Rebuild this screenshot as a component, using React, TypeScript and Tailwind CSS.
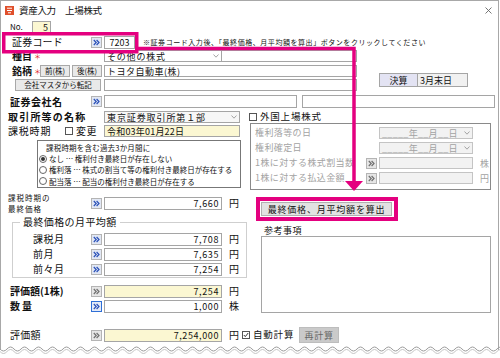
import React from 'react';

const JP = "font-['Noto_Sans_CJK_JP',sans-serif]";

type GoKind = 'blue' | 'gray' | 'active';

function Go({ kind = 'blue' }: { kind?: GoKind }) {
  const frame =
    kind === 'gray'
      ? 'bg-[#e6e6e6] border-[#b4b4b4]'
      : kind === 'active'
        ? 'bg-[#e4ebf8] border-[#2f6fd6]'
        : 'bg-[#e1e7f4] border-[#b4b4b4]';
  const stroke = kind === 'gray' ? '#707070' : '#2a50b8';
  return (
    <span className={`w-[11px] h-[11px] shrink-0 border flex items-center justify-center ${frame}`}>
      <svg width="7" height="7" viewBox="0 0 7 7" fill="none" stroke={stroke} strokeWidth="1.2">
        <path d="M0.8 1l2.4 2.5L0.8 6M3.6 1l2.4 2.5L3.6 6" />
      </svg>
    </span>
  );
}

function Field({ className = '', children }: { className?: string; children?: React.ReactNode }) {
  return (
    <div className={`h-[12px] border border-[#a5a5a5] flex items-center px-[2px] text-[9px] leading-none whitespace-nowrap shrink-0 ${className}`}>
      {children}
    </div>
  );
}

function Chevron() {
  return (
    <svg width="6" height="4" viewBox="0 0 6 4" fill="none" stroke="#9a9a9a" strokeWidth="0.9" className="shrink-0">
      <path d="M0.5 0.5L3 3.2L5.5 0.5" />
    </svg>
  );
}

function Check({ on = false }: { on?: boolean }) {
  return (
    <span className="w-[8px] h-[8px] border border-[#555] bg-white shrink-0 flex items-center justify-center">
      {on && (
        <svg width="6" height="6" viewBox="0 0 6 6" fill="none" stroke="#333" strokeWidth="1">
          <path d="M0.8 3l1.5 1.6L5.2 1" />
        </svg>
      )}
    </span>
  );
}

function Radio({ on = false }: { on?: boolean }) {
  return (
    <span className="w-[8px] h-[8px] rounded-full border border-[#666] bg-white shrink-0 flex items-center justify-center">
      {on && <span className="w-[4px] h-[4px] rounded-full bg-[#333]" />}
    </span>
  );
}

function Btn({ className = '', children }: { className?: string; children: React.ReactNode }) {
  return (
    <span className={`h-[12px] border border-[#a8a8a8] bg-[#e9e9e9] flex items-center justify-center text-[7.5px] leading-none whitespace-nowrap shrink-0 ${className}`}>
      {children}
    </span>
  );
}

function Star() {
  return <span className="text-[#e02020] text-[7px] ml-[2px] leading-none shrink-0">＊</span>;
}

function Wave() {
  let top = 'M0 3';
  let low = 'M0 5.5';
  for (let x = 0; x < 504; x += 14) {
    top += ` Q${x + 3.5} 7 ${x + 7} 3 Q${x + 10.5} -1 ${x + 14} 3`;
    low += ` Q${x + 3.5} 9.5 ${x + 7} 5.5 Q${x + 10.5} 1.5 ${x + 14} 5.5`;
  }
  return (
    <svg width="500" height="10" viewBox="0 0 500 10" className="block shrink-0 -mt-[4px]">
      <path d={top} fill="none" stroke="#9c9c9c" strokeWidth="1" />
      <path d={low} fill="none" stroke="#c4c4c4" strokeWidth="1" />
    </svg>
  );
}

function AvgRow({ label, value, first = false }: { label: string; value: string; first?: boolean }) {
  return (
    <div className={`h-[12px] flex items-center ${first ? 'mt-[5px]' : 'mt-[3px]'}`}>
      <span className="ml-[20px] w-[58px] shrink-0 whitespace-nowrap text-[10px] tracking-[0.5px] leading-none">{label}</span>
      <Go />
      <Field className="ml-[2px] w-[118px] h-[13px] justify-end tracking-[0.6px]">{value}</Field>
      <span className="ml-[7px] text-[10px] leading-none">円</span>
    </div>
  );
}

function RightRow({ label, go, unit, date }: { label: string; go?: boolean; unit?: string; date?: boolean }) {
  return (
    <div className="h-[12px] flex items-center">
      <span
        className={`pl-[4px] shrink-0 text-[9px] tracking-[0.4px] text-[#a3a3a3] leading-[12px] whitespace-nowrap ${go ? 'w-[115px]' : 'w-[128px]'}`}
      >
        {label}
      </span>
      {go && (
        <span className="mr-[2px]">
          <Go kind="gray" />
        </span>
      )}
      {date ? (
        <Field className="w-[94px] justify-between border-[#c4c4c4] bg-[#f2f2f2] text-[#a3a3a3]">
          <span className="tracking-[0.3px]">_____年__月__日</span>
          <Chevron />
        </Field>
      ) : (
        <Field className="w-[94px] border-[#c4c4c4] bg-[#f2f2f2]" />
      )}
      {unit && <span className="ml-[7px] text-[9px] text-[#a3a3a3] leading-none">{unit}</span>}
    </div>
  );
}

export default function App() {
  return (
    <div className={`relative w-[500px] h-[358px] overflow-hidden bg-white text-[#111] flex flex-col ${JP}`}>
      <div className="w-[499px] h-[350px] shrink-0 border-l border-t border-r border-[#a8a8a8] flex flex-col">
        {/* title bar */}
        <div className="h-[19px] flex items-center pl-[4px] pr-[4px] shrink-0">
          <svg width="9" height="9" viewBox="0 0 9 9" className="shrink-0">
            <rect width="9" height="9" fill="#e0502c" />
            <path d="M2 2.2h5M2 4.5h5M3 6.8h3" stroke="#fff" strokeWidth="1" />
          </svg>
          <span className="ml-[5px] text-[9.5px] tracking-[-0.3px] leading-none whitespace-nowrap">資産入力　上場株式</span>
          <svg width="7" height="7" viewBox="0 0 7 7" stroke="#666" strokeWidth="0.9" className="ml-auto mr-[2px]">
            <path d="M0.5 0.5l6 6M6.5 0.5l-6 6" />
          </svg>
        </div>

        {/* No. */}
        <div className="h-[12px] mt-[1px] flex items-center shrink-0">
          <span className="ml-[9px] w-[22px] shrink-0 text-[8px] leading-none">No.</span>
          <Field className="w-[19px] h-[12px] justify-end bg-[#fbf7d2]">5</Field>
        </div>

        {/* 証券コード */}
        <div className="h-[12px] mt-[3px] flex items-center shrink-0">
          <span className="ml-[11px] w-[79px] shrink-0 whitespace-nowrap text-[10px] tracking-[0.2px] leading-none">証券コード</span>
          <Go />
          <Field className="ml-[2px] w-[31px] h-[13px] justify-center text-[9.5px]">7203</Field>
          <span className="ml-[8px] text-[7px] tracking-[0.55px] leading-none whitespace-nowrap">
            ※証券コード入力後、「最終価格、月平均額を算出」ボタンをクリックしてください
          </span>
        </div>

        {/* 種目 */}
        <div className="h-[12px] mt-[2px] flex items-center shrink-0">
          <span className="ml-[11px] w-[92px] shrink-0 flex items-center">
            <span className="font-bold text-[10px] leading-none whitespace-nowrap">種目</span>
            <Star />
          </span>
          <Field className="w-[118px] justify-between tracking-[0.8px]">
            <span>その他の株式</span>
            <Chevron />
          </Field>
          <Field className="-ml-px w-[136px]" />
        </div>

        {/* 銘柄 / 会社マスタ / 決算 */}
        <div className="mt-[3px] flex shrink-0">
          <div className="w-[356px] shrink-0 flex flex-col">
            <div className="h-[12px] flex items-center">
              <span className="ml-[11px] w-[28px] shrink-0 flex items-center">
                <span className="font-bold text-[10px] leading-none whitespace-nowrap">銘柄</span>
                <Star />
              </span>
              <Btn className="w-[30px]">前(株)</Btn>
              <Btn className="ml-[2px] w-[30px]">後(株)</Btn>
              <Field className="ml-[2px] w-[253px] tracking-[0.5px]">トヨタ自動車(株)</Field>
            </div>
            <div className="h-[12px] mt-[2px] flex items-center">
              <Btn className="ml-[14px] w-[86px]">会社マスタから転記</Btn>
              <Field className="ml-[3px] w-[253px]" />
            </div>
          </div>
          <div className="ml-[22px] mt-[8px] h-[14px] flex">
            <span className="w-[39px] border border-[#a5a5a5] bg-[#e3e3f3] flex items-center justify-center text-[9px] leading-none">
              決算
            </span>
            <span className="w-[51px] -ml-px border border-[#a5a5a5] bg-[#f1f1f1] flex items-center pl-[2px] text-[9px] leading-none">
              3月末日
            </span>
          </div>
        </div>

        {/* 証券会社名 */}
        <div className="h-[13px] mt-[4px] flex items-center shrink-0">
          <span className="ml-[9px] w-[81px] shrink-0 whitespace-nowrap font-bold text-[10px] tracking-[0.5px] leading-none">証券会社名</span>
          <Go />
          <Field className="ml-[2px] w-[193px] h-[13px]" />
          <Field className="ml-[5px] w-[193px] h-[13px]" />
        </div>

        {/* two columns */}
        <div className="mt-[2px] flex shrink-0">
          {/* left */}
          <div className="w-[246px] shrink-0 flex flex-col">
            <div className="h-[12px] mt-[1px] flex items-center">
              <span className="ml-[7px] w-[96px] shrink-0 font-bold text-[10px] tracking-[1.2px] leading-none whitespace-nowrap">
                取引所等の名称
              </span>
              <Field className="w-[136px] justify-between bg-[#f7f7f7] tracking-[0.9px]">
                <span>東京証券取引所第１部</span>
                <Chevron />
              </Field>
            </div>
            <div className="h-[12px] mt-[2px] flex items-center">
              <span className="ml-[7px] w-[57px] shrink-0 whitespace-nowrap text-[10px] tracking-[0.8px] leading-none">課税時期</span>
              <span className="w-[39px] shrink-0 flex items-center">
                <Check />
                <span className="ml-[3px] text-[10px] tracking-[0.5px] leading-none whitespace-nowrap">変更</span>
              </span>
              <Field className="w-[136px] bg-[#fbf7d2] tracking-[0.2px]">令和03年01月22日</Field>
            </div>
            <div className="ml-[36px] mt-[3px] w-[204px] h-[48px] border border-[#777] flex flex-col px-[1px] pt-[1px] text-[7.5px] leading-none">
              <div className="h-[11px] flex items-center pl-[7px] tracking-[0.2px] whitespace-nowrap">課税時期を含む過去3か月間に</div>
              <div className="h-[11.5px] flex items-center gap-[2px] whitespace-nowrap">
                <Radio on />
                なし … 権利付き最終日が存在しない
              </div>
              <div className="h-[11.5px] flex items-center gap-[2px] whitespace-nowrap">
                <Radio />
                権利落 … 株式の割当て等の権利付き最終日が存在する
              </div>
              <div className="h-[11.5px] flex items-center gap-[2px] whitespace-nowrap">
                <Radio />
                配当落 … 配当の権利付き最終日が存在する
              </div>
            </div>

            <div className="h-[22px] mt-[4px] flex items-center">
              <span className="ml-[7px] w-[83px] shrink-0 flex flex-col text-[7.5px] tracking-[1px]">
                <span className="h-[11px] leading-[11px] whitespace-nowrap">課税時期の</span>
                <span className="h-[11px] leading-[11px] whitespace-nowrap">最終価格</span>
              </span>
              <Go />
              <Field className="ml-[2px] w-[118px] h-[13px] justify-end tracking-[0.6px]">7,660</Field>
              <span className="ml-[7px] text-[10px] leading-none">円</span>
            </div>

            <fieldset className="ml-[11px] mt-[2px] w-[235px] border border-[#cfcfcf] pb-[2px]">
              <legend className="ml-[7px] px-[3px] text-[10px] leading-[12px] tracking-[0.4px] whitespace-nowrap">最終価格の月平均額</legend>
              <AvgRow label="課税月" value="7,708" first />
              <AvgRow label="前月" value="7,635" />
              <AvgRow label="前々月" value="7,254" />
            </fieldset>

            <div className="h-[12px] mt-[7px] flex items-center">
              <span className="ml-[9px] w-[81px] shrink-0 whitespace-nowrap font-bold text-[10px] leading-none">評価額(1株)</span>
              <Go kind="gray" />
              <Field className="ml-[2px] w-[118px] h-[13px] justify-end bg-[#fbf7d2] tracking-[0.6px]">7,254</Field>
              <span className="ml-[7px] text-[10px] leading-none">円</span>
            </div>
            <div className="h-[12px] mt-[3px] flex items-center">
              <span className="ml-[9px] w-[81px] shrink-0 whitespace-nowrap font-bold text-[10px] tracking-[2px] leading-none">数量</span>
              <Go kind="active" />
              <Field className="ml-[2px] w-[118px] h-[13px] justify-end tracking-[0.6px]">1,000</Field>
              <span className="ml-[7px] text-[10px] leading-none">株</span>
            </div>
          </div>

          {/* right */}
          <div className="flex-1 flex flex-col">
            <div className="h-[12px] mt-[1px] flex items-center">
              <span className="ml-[2px]">
                <Check />
              </span>
              <span className="ml-[3px] text-[9.5px] tracking-[0.8px] leading-none whitespace-nowrap">外国上場株式</span>
            </div>
            <div className="ml-[3px] w-[241px] h-[67px] border border-[#8a8a8a] flex flex-col gap-[3px] pt-[3px]">
              <RightRow label="権利落等の日" date />
              <RightRow label="権利確定日" date />
              <RightRow label="1株に対する株式割当数" go unit="株" />
              <RightRow label="1株に対する払込金額" go unit="円" />
            </div>
            <div className="ml-[9px] mt-[7px] w-[142px] h-[24px] border-[4px] border-[#e4007f] flex pl-[1px] pr-[2px] py-[1px]">
              <span className="flex-1 border border-[#b0b0b0] bg-[#e2e2e2] flex items-center justify-center text-[9px] tracking-[0.8px] leading-none whitespace-nowrap">
                最終価格、月平均額を算出
              </span>
            </div>
            <div className="h-[12px] mt-[3px] flex items-center">
              <span className="ml-[17px] text-[9px] tracking-[0.5px] leading-none whitespace-nowrap">参考事項</span>
            </div>
            <div className="ml-[14px] w-[230px] h-[77px] border border-[#a5a5a5]" />
          </div>
        </div>

        {/* 評価額 */}
        <div className="h-[12px] mt-[16px] flex items-center shrink-0">
          <span className="ml-[9px] w-[81px] shrink-0 whitespace-nowrap text-[10px] tracking-[0.2px] leading-none">評価額</span>
          <Go kind="gray" />
          <Field className="ml-[2px] w-[118px] h-[13px] justify-end bg-[#fbf7d2] tracking-[0.6px]">7,254,000</Field>
          <span className="ml-[7px] text-[10px] leading-none">円</span>
          <span className="ml-[3px]">
            <Check on />
          </span>
          <span className="ml-[3px] text-[9.5px] tracking-[0.8px] leading-none whitespace-nowrap">自動計算</span>
          <span className="ml-[5px] w-[40px] h-[16px] bg-[#cacaca] border border-[#bdbdbd] flex items-center justify-center text-[9px] tracking-[0.8px] text-[#666] leading-none">
            再計算
          </span>
        </div>
      </div>

      <Wave />

      {/* magenta annotation */}
      <svg width="500" height="358" viewBox="0 0 500 358" className="absolute left-0 top-0 pointer-events-none">
        <rect x="3.75" y="33.75" width="133" height="18" fill="none" stroke="#e4007f" strokeWidth="3.5" />
        <path d="M137 48.5H354V182" fill="none" stroke="#e4007f" strokeWidth="3.5" />
        <path d="M345 181H363L354 191Z" fill="#e4007f" />
      </svg>
    </div>
  );
}
